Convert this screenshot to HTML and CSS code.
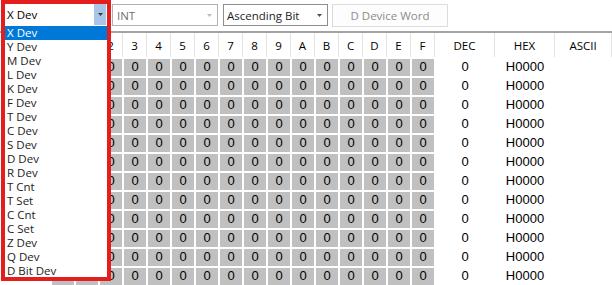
FILE: index.html
```html
<!DOCTYPE html>
<html>
<head>
<meta charset="utf-8">
<link rel="stylesheet" href="styles.css">
</head>
<body>
<div class="app">
  <div class="toolbar">
    <div class="combo-open">
      <div class="combo-head"><span class="val">X Dev</span><span class="drop-btn"><svg width="5" height="3" viewBox="0 0 5 3"><polygon points="0,0 5,0 2.5,3" fill="#3c3c3c"/></svg></span></div>
      <ul class="drop-list">
        <li class="sel">X Dev</li>
        <li>Y Dev</li>
        <li>M Dev</li>
        <li>L Dev</li>
        <li>K Dev</li>
        <li>F Dev</li>
        <li>T Dev</li>
        <li>C Dev</li>
        <li>S Dev</li>
        <li>D Dev</li>
        <li>R Dev</li>
        <li>T Cnt</li>
        <li>T Set</li>
        <li>C Cnt</li>
        <li>C Set</li>
        <li>Z Dev</li>
        <li>Q Dev</li>
        <li>D Bit Dev</li>
      </ul>
    </div>
    <div class="combo disabled"><span>INT</span><svg width="5" height="3" viewBox="0 0 5 3"><polygon points="0,0 5,0 2.5,3" fill="#bcbcbc"/></svg></div>
    <div class="combo asc"><span>Ascending Bit</span><svg width="5" height="3" viewBox="0 0 5 3"><polygon points="0,0 5,0 2.5,3" fill="#505050"/></svg></div>
    <button class="btn">D Device Word</button>
  </div>
  <div class="table">
    <div class="hrow"><div class="lbl"></div><div>0</div><div>1</div><div>2</div><div>3</div><div>4</div><div>5</div><div>6</div><div>7</div><div>8</div><div>9</div><div>A</div><div>B</div><div>C</div><div>D</div><div>E</div><div>F</div><div>DEC</div><div>HEX</div><div>ASCII</div></div>
    <div class="row"><div class="lbl"></div><div class="b">0</div><div class="b">0</div><div class="b">0</div><div class="b">0</div><div class="b">0</div><div class="b">0</div><div class="b">0</div><div class="b">0</div><div class="b">0</div><div class="b">0</div><div class="b">0</div><div class="b">0</div><div class="b">0</div><div class="b">0</div><div class="b">0</div><div class="b">0</div><div class="v">0</div><div class="v">H0000</div><div class="v"></div></div>
    <div class="row"><div class="lbl"></div><div class="b">0</div><div class="b">0</div><div class="b">0</div><div class="b">0</div><div class="b">0</div><div class="b">0</div><div class="b">0</div><div class="b">0</div><div class="b">0</div><div class="b">0</div><div class="b">0</div><div class="b">0</div><div class="b">0</div><div class="b">0</div><div class="b">0</div><div class="b">0</div><div class="v">0</div><div class="v">H0000</div><div class="v"></div></div>
    <div class="row"><div class="lbl"></div><div class="b">0</div><div class="b">0</div><div class="b">0</div><div class="b">0</div><div class="b">0</div><div class="b">0</div><div class="b">0</div><div class="b">0</div><div class="b">0</div><div class="b">0</div><div class="b">0</div><div class="b">0</div><div class="b">0</div><div class="b">0</div><div class="b">0</div><div class="b">0</div><div class="v">0</div><div class="v">H0000</div><div class="v"></div></div>
    <div class="row"><div class="lbl"></div><div class="b">0</div><div class="b">0</div><div class="b">0</div><div class="b">0</div><div class="b">0</div><div class="b">0</div><div class="b">0</div><div class="b">0</div><div class="b">0</div><div class="b">0</div><div class="b">0</div><div class="b">0</div><div class="b">0</div><div class="b">0</div><div class="b">0</div><div class="b">0</div><div class="v">0</div><div class="v">H0000</div><div class="v"></div></div>
    <div class="row"><div class="lbl"></div><div class="b">0</div><div class="b">0</div><div class="b">0</div><div class="b">0</div><div class="b">0</div><div class="b">0</div><div class="b">0</div><div class="b">0</div><div class="b">0</div><div class="b">0</div><div class="b">0</div><div class="b">0</div><div class="b">0</div><div class="b">0</div><div class="b">0</div><div class="b">0</div><div class="v">0</div><div class="v">H0000</div><div class="v"></div></div>
    <div class="row"><div class="lbl"></div><div class="b">0</div><div class="b">0</div><div class="b">0</div><div class="b">0</div><div class="b">0</div><div class="b">0</div><div class="b">0</div><div class="b">0</div><div class="b">0</div><div class="b">0</div><div class="b">0</div><div class="b">0</div><div class="b">0</div><div class="b">0</div><div class="b">0</div><div class="b">0</div><div class="v">0</div><div class="v">H0000</div><div class="v"></div></div>
    <div class="row"><div class="lbl"></div><div class="b">0</div><div class="b">0</div><div class="b">0</div><div class="b">0</div><div class="b">0</div><div class="b">0</div><div class="b">0</div><div class="b">0</div><div class="b">0</div><div class="b">0</div><div class="b">0</div><div class="b">0</div><div class="b">0</div><div class="b">0</div><div class="b">0</div><div class="b">0</div><div class="v">0</div><div class="v">H0000</div><div class="v"></div></div>
    <div class="row"><div class="lbl"></div><div class="b">0</div><div class="b">0</div><div class="b">0</div><div class="b">0</div><div class="b">0</div><div class="b">0</div><div class="b">0</div><div class="b">0</div><div class="b">0</div><div class="b">0</div><div class="b">0</div><div class="b">0</div><div class="b">0</div><div class="b">0</div><div class="b">0</div><div class="b">0</div><div class="v">0</div><div class="v">H0000</div><div class="v"></div></div>
    <div class="row"><div class="lbl"></div><div class="b">0</div><div class="b">0</div><div class="b">0</div><div class="b">0</div><div class="b">0</div><div class="b">0</div><div class="b">0</div><div class="b">0</div><div class="b">0</div><div class="b">0</div><div class="b">0</div><div class="b">0</div><div class="b">0</div><div class="b">0</div><div class="b">0</div><div class="b">0</div><div class="v">0</div><div class="v">H0000</div><div class="v"></div></div>
    <div class="row"><div class="lbl"></div><div class="b">0</div><div class="b">0</div><div class="b">0</div><div class="b">0</div><div class="b">0</div><div class="b">0</div><div class="b">0</div><div class="b">0</div><div class="b">0</div><div class="b">0</div><div class="b">0</div><div class="b">0</div><div class="b">0</div><div class="b">0</div><div class="b">0</div><div class="b">0</div><div class="v">0</div><div class="v">H0000</div><div class="v"></div></div>
    <div class="row"><div class="lbl"></div><div class="b">0</div><div class="b">0</div><div class="b">0</div><div class="b">0</div><div class="b">0</div><div class="b">0</div><div class="b">0</div><div class="b">0</div><div class="b">0</div><div class="b">0</div><div class="b">0</div><div class="b">0</div><div class="b">0</div><div class="b">0</div><div class="b">0</div><div class="b">0</div><div class="v">0</div><div class="v">H0000</div><div class="v"></div></div>
    <div class="row"><div class="lbl"></div><div class="b">0</div><div class="b">0</div><div class="b">0</div><div class="b">0</div><div class="b">0</div><div class="b">0</div><div class="b">0</div><div class="b">0</div><div class="b">0</div><div class="b">0</div><div class="b">0</div><div class="b">0</div><div class="b">0</div><div class="b">0</div><div class="b">0</div><div class="b">0</div><div class="v">0</div><div class="v">H0000</div><div class="v"></div></div>
  </div>
</div>
</body>
</html>
```

FILE: styles.css
```css
html, body {
  margin: 0;
  padding: 0;
  background: #ffffff;
}
body {
  font-family: "Open Sans", "Noto Sans", sans-serif;
  font-size: 11.5px;
  color: #000;
  overflow: hidden;
}
.app {
  width: 612px;
  height: 285px;
  overflow: hidden;
}
.toolbar {
  display: flex;
  align-items: flex-start;
  height: 31px;
  padding: 4px 0 0 5px;
  box-sizing: border-box;
}
.combo-open {
  position: relative;
  width: 101px;
  height: 22px;
  flex: none;
  z-index: 2;
}
.combo-head {
  display: flex;
  height: 22px;
  background: #fff;
}
.combo-head .val {
  flex: 1;
  padding-left: 2px;
  line-height: 22px;
  color: #000;
}
.drop-btn {
  width: 12px;
  height: 21px;
  background: #a9c5e8;
  display: flex;
  align-items: center;
  justify-content: center;
}
.drop-list {
  position: absolute;
  top: 22px;
  left: 0;
  width: 102px;
  height: 251px;
  overflow: hidden;
  margin: 0;
  padding: 0;
  list-style: none;
  background: #fff;
}
.drop-list li {
  height: 14px;
  line-height: 14px;
  padding-left: 2px;
  color: #1c1c1c;
  white-space: nowrap;
}
.drop-list li.sel {
  background: #0078d7;
  color: #fff;
}
.combo-open::after {
  content: "";
  position: absolute;
  left: -4px;
  top: -4px;
  width: 110px;
  height: 281px;
  border: 4px solid #e41d1d;
  box-sizing: border-box;
  pointer-events: none;
}
.combo {
  flex: none;
  display: flex;
  align-items: center;
  justify-content: space-between;
  height: 22px;
  box-sizing: border-box;
  border: 1px solid #adadad;
  background: #fff;
  padding: 0 5px 0 4px;
}
.combo.disabled {
  margin-left: 6px;
  width: 106px;
  color: #6f6f6f;
  border-color: #b2b2b2;
}
.combo.asc {
  margin-left: 5px;
  width: 105px;
  color: #1e1e1e;
  border-color: #8e8e8e;
  padding-left: 3px;
}
.btn {
  flex: none;
  margin-left: 4px;
  width: 116px;
  height: 23px;
  border: 1px solid #dcdcdc;
  background: #fdfdfd;
  color: #8c8c8c;
  font: inherit;
  padding: 0;
}
.table {
  border-top: 2px solid #a3a3a3;
}
.hrow, .row {
  display: grid;
  grid-template-columns: 51px repeat(16, 24px) 60px 60px 1fr;
}
.hrow {
  height: 24px;
}
.hrow > div {
  display: flex;
  align-items: center;
  justify-content: center;
  border-right: 1px solid #e3e3e3;
  color: #000;
}
.hrow > .lbl {
  border-right: none;
}
.row {
  height: 19px;
  font-family: "Liberation Sans", Arial, sans-serif;
  font-size: 13px;
}
.row .b {
  margin: 2px 1px 0 1px;
  background: #c0c0c0;
  text-align: center;
  line-height: 15px;
}
.row .v {
  text-align: center;
  line-height: 19px;
}
```
